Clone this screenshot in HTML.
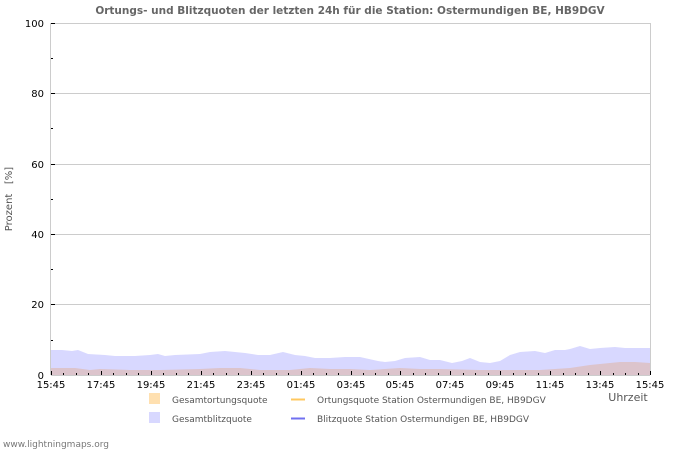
<!DOCTYPE html>
<html><head><style>body{margin:0;background:#fff}svg{display:block}text{font-family:"DejaVu Sans","Liberation Sans",sans-serif;white-space:pre}</style></head><body>
<svg width="700" height="450" viewBox="0 0 700 450" xmlns="http://www.w3.org/2000/svg">
<text x="350" y="14" text-anchor="middle" font-size="10.5" font-weight="bold" fill="#666">Ortungs- und Blitzquoten der letzten 24h für die Station: Ostermundigen BE, HB9DGV</text>
<g stroke="#ccc" stroke-width="1">
<line x1="51" y1="23.5" x2="650" y2="23.5"/><line x1="51" y1="93.5" x2="650" y2="93.5"/><line x1="51" y1="164.5" x2="650" y2="164.5"/><line x1="51" y1="234.5" x2="650" y2="234.5"/><line x1="51" y1="304.5" x2="650" y2="304.5"/>
<line x1="650.5" y1="23" x2="650.5" y2="375"/><line x1="50.5" y1="23" x2="50.5" y2="375"/>
</g>
<polygon fill="#d8d8ff" points="51,375 51,350 62,350 72,351 78,350 88,354 105,355 115,356 135,356 150,355 158,354 165,356 175,355 200,354 210,352 225,351 245,353 258,355 270,355 283,352 295,355 305,356 315,358 330,358 345,357 360,357 378,361 385,362 395,361 405,358 420,357 430,360 440,360 452,363 462,361 470,358 480,362 490,363 500,361 510,355 520,352 535,351 545,353 555,350 565,350 570,349 580,346 590,349 600,348 615,347 625,348 650,348 650,375"/>
<polygon fill="#dcc4cc" points="51,375 51,368 75,368 90,370 100,369 130,370 160,370 200,369 220,368 240,368 260,370 290,370 310,368 330,369 350,369 370,370 400,368 420,369 440,369 480,370 540,370 570,368 590,365 620,362 635,362 650,363 650,375"/>
<line x1="51" y1="375.5" x2="650" y2="375.5" stroke="#ccc"/>
<g stroke="#000" stroke-width="1">
<line x1="51" y1="23.5" x2="55" y2="23.5"/><line x1="51" y1="58.5" x2="53" y2="58.5"/><line x1="51" y1="93.5" x2="55" y2="93.5"/><line x1="51" y1="128.5" x2="53" y2="128.5"/><line x1="51" y1="164.5" x2="55" y2="164.5"/><line x1="51" y1="199.5" x2="53" y2="199.5"/><line x1="51" y1="234.5" x2="55" y2="234.5"/><line x1="51" y1="269.5" x2="53" y2="269.5"/><line x1="51" y1="304.5" x2="55" y2="304.5"/><line x1="51" y1="340.5" x2="53" y2="340.5"/>
</g>
<g font-size="10" fill="#000" text-anchor="end">
<text x="44" y="27">100</text><text x="44" y="97">80</text><text x="44" y="168">60</text><text x="44" y="238">40</text><text x="44" y="308">20</text><text x="44" y="379">0</text>
</g>
<text transform="translate(12,199) rotate(-90)" text-anchor="middle" font-size="10" fill="#555">Prozent   [%]</text>
<g font-size="10" fill="#000" text-anchor="middle">
<text x="51" y="388">15:45</text><text x="101" y="388">17:45</text><text x="151" y="388">19:45</text><text x="201" y="388">21:45</text><text x="251" y="388">23:45</text><text x="301" y="388">01:45</text><text x="351" y="388">03:45</text><text x="400" y="388">05:45</text><text x="450" y="388">07:45</text><text x="500" y="388">09:45</text><text x="550" y="388">11:45</text><text x="600" y="388">13:45</text><text x="650" y="388">15:45</text>
</g>
<text x="628" y="401" text-anchor="middle" font-size="11" fill="#555">Uhrzeit</text>
<rect x="149" y="393" width="11" height="11" fill="#ffe0b0"/>
<rect x="149" y="412" width="11" height="11" fill="#d8d8ff"/>
<line x1="291" y1="399.5" x2="305" y2="399.5" stroke="#ffc860" stroke-width="2"/>
<line x1="291" y1="418.5" x2="305" y2="418.5" stroke="#7070f0" stroke-width="2"/>
<g font-size="9" fill="#555">
<text x="172" y="403">Gesamtortungsquote</text><text x="172" y="422">Gesamtblitzquote</text>
<text x="317" y="403">Ortungsquote Station Ostermundigen BE, HB9DGV</text><text x="317" y="422">Blitzquote Station Ostermundigen BE, HB9DGV</text>
</g>
<text x="3" y="447" font-size="9" fill="#777">www.lightningmaps.org</text>
<g stroke="#000">
<path d="M51.5 375v-4M63.5 375v-2M76.5 375v-2M88.5 375v-2M101.5 375v-4M113.5 375v-2M126.5 375v-2M138.5 375v-2M151.5 375v-4M163.5 375v-2M176.5 375v-2M188.5 375v-2M201.5 375v-4M213.5 375v-2M226.5 375v-2M238.5 375v-2M251.5 375v-4M263.5 375v-2M276.5 375v-2M288.5 375v-2M301.5 375v-4M313.5 375v-2M326.5 375v-2M338.5 375v-2M351.5 375v-4M363.5 375v-2M375.5 375v-2M388.5 375v-2M400.5 375v-4M413.5 375v-2M425.5 375v-2M438.5 375v-2M450.5 375v-4M463.5 375v-2M475.5 375v-2M488.5 375v-2M500.5 375v-4M513.5 375v-2M525.5 375v-2M538.5 375v-2M550.5 375v-4M563.5 375v-2M575.5 375v-2M588.5 375v-2M600.5 375v-4M613.5 375v-2M625.5 375v-2M638.5 375v-2M650.5 375v-4"/>
</g>
</svg>
</body></html>
